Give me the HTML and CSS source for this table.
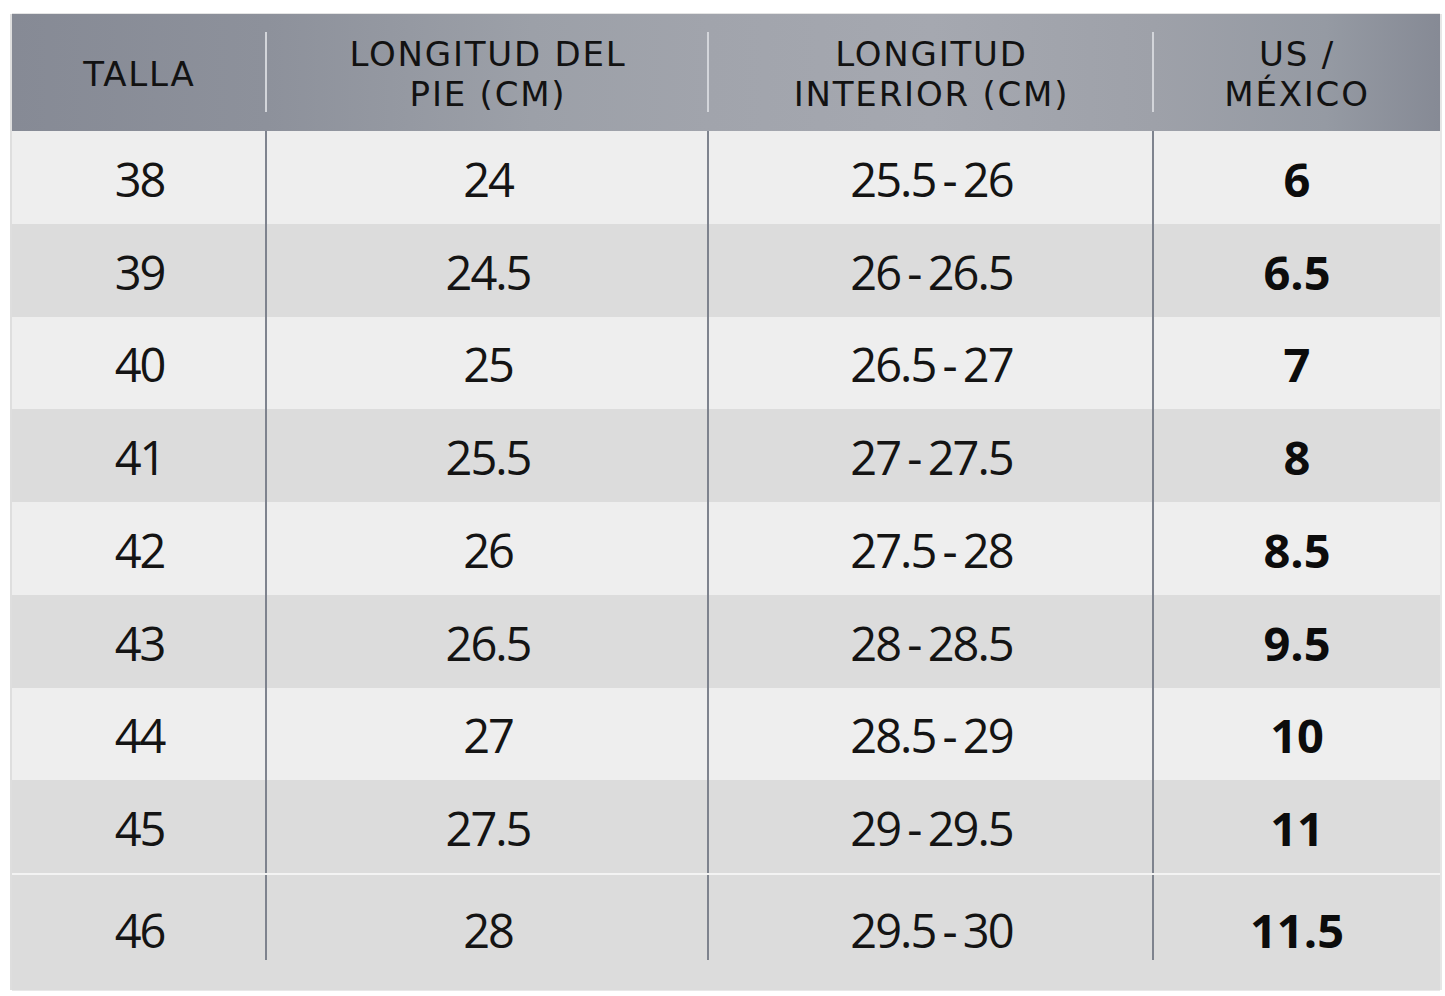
FILE: index.html
```html
<!DOCTYPE html>
<html lang="es">
<head>
<meta charset="utf-8">
<title>Tabla de tallas</title>
<link rel="stylesheet" href="styles.css">
</head>
<body>
<div class="wrap">
  <div class="chart">
    <div class="hd c1">TALLA</div>
    <div class="hd c2">LONGITUD DEL<br>PIE (CM)</div>
    <div class="hd c3">LONGITUD<br>INTERIOR (CM)</div>
    <div class="hd c4">US /<br>MÉXICO</div>

    <div class="cell light sep">38</div><div class="cell light sep">24</div><div class="cell light sep">25.5 - 26</div><div class="cell light us">6</div>
    <div class="cell dark sep">39</div><div class="cell dark sep">24.5</div><div class="cell dark sep">26 - 26.5</div><div class="cell dark us">6.5</div>
    <div class="cell light sep">40</div><div class="cell light sep">25</div><div class="cell light sep">26.5 - 27</div><div class="cell light us">7</div>
    <div class="cell dark sep">41</div><div class="cell dark sep">25.5</div><div class="cell dark sep">27 - 27.5</div><div class="cell dark us">8</div>
    <div class="cell light sep">42</div><div class="cell light sep">26</div><div class="cell light sep">27.5 - 28</div><div class="cell light us">8.5</div>
    <div class="cell dark sep">43</div><div class="cell dark sep">26.5</div><div class="cell dark sep">28 - 28.5</div><div class="cell dark us">9.5</div>
    <div class="cell light sep">44</div><div class="cell light sep">27</div><div class="cell light sep">28.5 - 29</div><div class="cell light us">10</div>
    <div class="cell dark sep">45</div><div class="cell dark sep">27.5</div><div class="cell dark sep">29 - 29.5</div><div class="cell dark us">11</div>
    <div class="cell last sepl">46</div><div class="cell last sepl">28</div><div class="cell last sepl">29.5 - 30</div><div class="cell last us">11.5</div>
  </div>
</div>
</body>
</html>
```

FILE: styles.css
```css
* { box-sizing: border-box; }

body {
  margin: 0;
  background: #ffffff;
  font-family: "Open Sans", "Liberation Sans", sans-serif;
  color: #111111;
}

.wrap {
  padding: 14px 5px 6px 12px;
}

.chart {
  display: grid;
  grid-template-columns: 255px 442px 445px 286px;
  grid-template-rows: 117px repeat(8, 92.75px) 117px;
  box-shadow: -2px 0 0 #dedede, 0 -1px 0 #e4e4e4, 2px 0 0 #e6e6e6, 0 1px 0 #e8e8e8;
}

.hd {
  display: flex;
  align-items: center;
  justify-content: center;
  text-align: center;
  padding-top: 2px;
  font-family: "DejaVu Sans", "Liberation Sans", sans-serif;
  font-size: 34px;
  line-height: 40px;
  letter-spacing: 1.8px;
  color: #121212;
}

.hd.c1 { --hbg: linear-gradient(90deg, #868a95 0%, #8d919b 100%); }
.hd.c2 { --hbg: linear-gradient(90deg, #8d919b 0%, #9ca0a8 60%, #a1a4ac 100%); }
.hd.c3 { --hbg: linear-gradient(90deg, #a1a4ac 0%, #a5a8b0 50%, #9ea1a9 100%); }
.hd.c4 { background: linear-gradient(90deg, #9ea1a9 0%, #959aa3 60%, #868a95 100%); }

.hd.c1, .hd.c2, .hd.c3 {
  background-image:
    linear-gradient(#d3d5da, #d3d5da),
    var(--hbg);
  background-size: 2px 80px, 100% 100%;
  background-position: right 18px, 0 0;
  background-repeat: no-repeat;
}

.cell {
  display: flex;
  align-items: center;
  justify-content: center;
  padding-top: 4px;
  font-size: 47px;
  line-height: 1;
  letter-spacing: -2px;
  word-spacing: -3px;
  color: #141414;
  background-repeat: no-repeat;
}

.light { background-color: #eeeeee; }
.dark { background-color: #dcdcdc; }
.last {
  background-color: #dcdcdc;
  border-top: 2px solid #f3f3f3;
  padding-top: 0;
  padding-bottom: 4px;
}

.sep {
  background-image: linear-gradient(#7e838e, #7e838e);
  background-size: 2px 100%;
  background-position: right top;
}

.sepl {
  background-image: linear-gradient(#7e838e, #7e838e);
  background-size: 2px 85px;
  background-position: right top;
}

.us {
  font-weight: 700;
  letter-spacing: 0;
  color: #0c0c0c;
}
```
